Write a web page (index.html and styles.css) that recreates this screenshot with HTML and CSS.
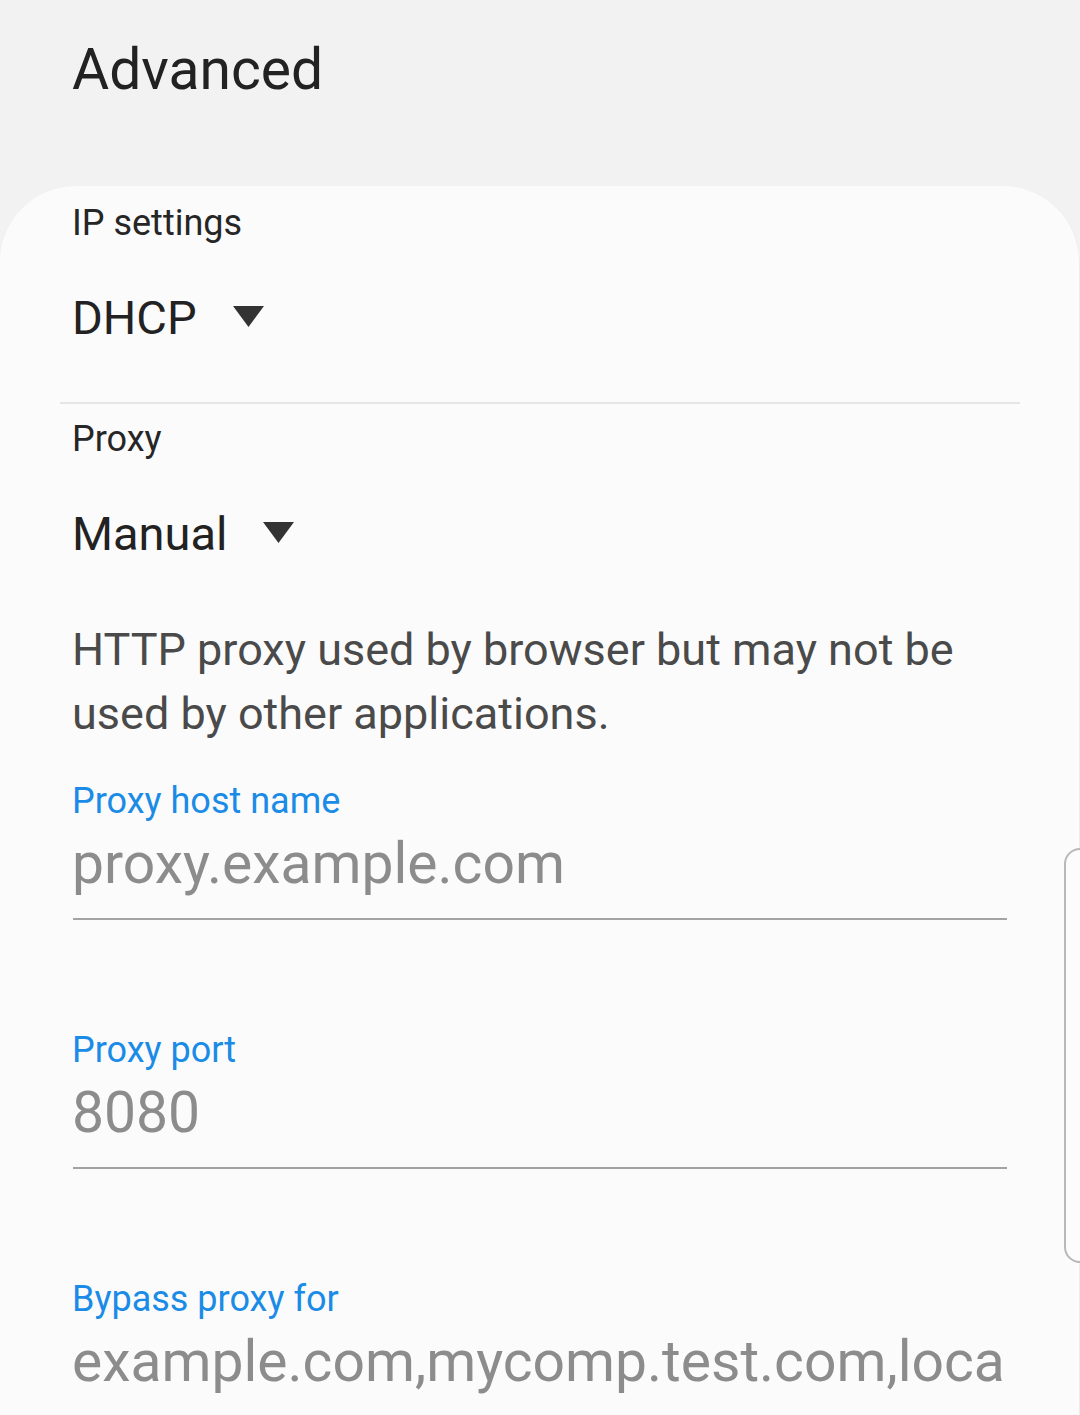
FILE: index.html
```html
<!DOCTYPE html>
<html lang="en">
<head>
<meta charset="utf-8">
<title>Advanced</title>
<link rel="stylesheet" href="styles.css">
</head>
<body>
<div class="screen">
  <header class="header">
    <h1 class="title">Advanced</h1>
  </header>
  <main class="card">
    <section class="setting">
      <div class="setting-label">IP settings</div>
      <div class="dropdown">
        <span class="dropdown-value">DHCP</span>
        <svg class="caret" width="31" height="21" viewBox="0 0 31 21"><polygon points="0,0 31,0 15.5,21" /></svg>
      </div>
    </section>
    <div class="divider"></div>
    <section class="setting">
      <div class="setting-label">Proxy</div>
      <div class="dropdown">
        <span class="dropdown-value">Manual</span>
        <svg class="caret" width="31" height="21" viewBox="0 0 31 21"><polygon points="0,0 31,0 15.5,21" /></svg>
      </div>
      <p class="description">HTTP proxy used by browser but may not be used by other applications.</p>
    </section>
    <div class="fields">
      <div class="field">
        <label class="field-label">Proxy host name</label>
        <div class="field-value">proxy.example.com</div>
      </div>
      <div class="field">
        <label class="field-label">Proxy port</label>
        <div class="field-value">8080</div>
      </div>
      <div class="field field-open">
        <label class="field-label">Bypass proxy for</label>
        <div class="field-value">example.com,mycomp.test.com,loca</div>
      </div>
    </div>
    <div class="scroll-handle"></div>
  </main>
</div>
</body>
</html>
```

FILE: styles.css
```css
* { box-sizing: border-box; }

html, body {
  margin: 0;
  padding: 0;
  background: #f2f2f2;
}

body {
  font-family: Roboto, "Noto Sans", "Liberation Sans", sans-serif;
  color: #252525;
}

.screen {
  width: 1080px;
  height: 1415px;
  overflow: hidden;
  display: flex;
  flex-direction: column;
}

.header {
  height: 186px;
  padding: 41px 0 0 72px;
  flex: none;
}

.title {
  margin: 0;
  font-size: 57px;
  font-weight: 400;
  line-height: 1;
  color: #222222;
}

.card {
  position: relative;
  flex: 1;
  background: #fbfbfb;
  border-radius: 76px 76px 0 0;
  padding-top: 19px;
  box-shadow: inset -1px 0 0 #ececec;
}

.setting {
  padding: 0 72px;
}

.setting-label {
  font-size: 36px;
  line-height: 1;
  color: #262626;
}

.dropdown {
  display: flex;
  align-items: center;
  gap: 36px;
  margin-top: 52px;
  height: 48px;
}

.dropdown-value {
  font-size: 47px;
  line-height: 1;
  color: #222222;
}

.caret {
  display: block;
  fill: #333333;
  margin-top: -2px;
}

.divider {
  height: 2px;
  margin: 61px 60px 0 60px;
  background: #e6e6e6;
}

.divider + .setting {
  padding-top: 17px;
}

.description {
  margin: 61px 0 0 0;
  font-size: 45px;
  line-height: 64px;
  color: #4a4a4a;
  max-width: 920px;
}

.fields {
  padding: 37px 73px 0 72px;
  display: flex;
  flex-direction: column;
  gap: 112px;
}

.field {
  border-bottom: 2px solid #a3a3a3;
  padding-bottom: 26px;
  margin-left: 1px;
}

.field-label,
.field-value {
  margin-left: -1px;
}

.field-open {
  border-bottom: none;
}

.field-label {
  display: block;
  font-size: 36px;
  line-height: 1;
  color: #1a8be6;
}

.field-value {
  margin-top: 16px;
  font-size: 57px;
  line-height: 1;
  color: #8c8c8c;
  white-space: nowrap;
}

.scroll-handle {
  position: absolute;
  top: 662px;
  right: -20px;
  width: 36px;
  height: 415px;
  border: 2px solid #b8b8b8;
  border-radius: 16px;
  background: #fcfcfc;
}
```
